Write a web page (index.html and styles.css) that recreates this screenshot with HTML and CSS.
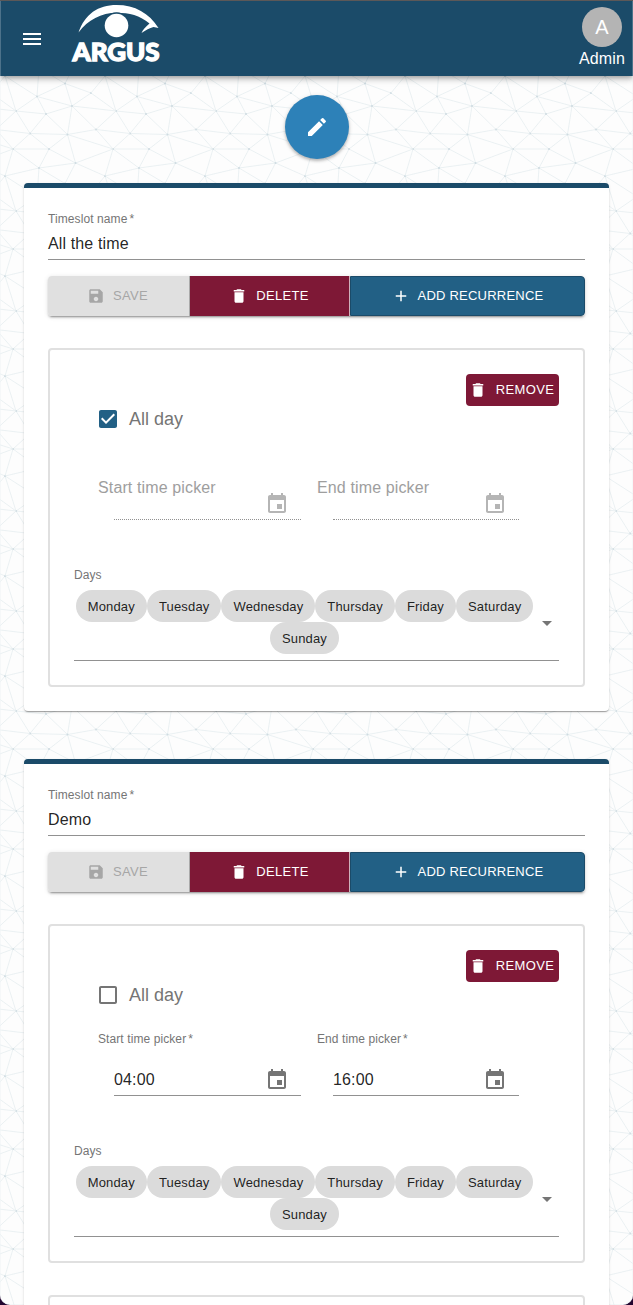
FILE: index.html
```html
<!DOCTYPE html>
<html lang="en">
<head>
<meta charset="utf-8">
<title>Argus - Timeslots</title>
<link rel="stylesheet" href="styles.css">
</head>
<body>
<svg class="defs" width="0" height="0">
  <symbol id="i-save" viewBox="0 0 24 24"><path d="M17 3H5c-1.11 0-2 .9-2 2v14c0 1.1.89 2 2 2h14c1.1 0 2-.9 2-2V7l-4-4zm-5 16c-1.66 0-3-1.34-3-3s1.34-3 3-3 3 1.34 3 3-1.34 3-3 3zm3-10H5V5h10v4z"/></symbol>
  <symbol id="i-delete" viewBox="0 0 24 24"><path d="M6 19c0 1.1.9 2 2 2h8c1.1 0 2-.9 2-2V7H6v12zM19 4h-3.5l-1-1h-5l-1 1H5v2h14V4z"/></symbol>
  <symbol id="i-add" viewBox="0 0 24 24"><path d="M19 13h-6v6h-2v-6H5v-2h6V5h2v6h6v2z"/></symbol>
  <symbol id="i-edit" viewBox="0 0 24 24"><path d="M3 17.25V21h3.75L17.81 9.94l-3.75-3.75L3 17.25zM20.71 7.04c.39-.39.39-1.02 0-1.41l-2.34-2.34a.9959.9959 0 00-1.41 0l-1.83 1.83 3.75 3.75 1.83-1.83z"/></symbol>
  <symbol id="i-menu" viewBox="0 0 24 24"><path d="M3 18h18v-2H3v2zm0-5h18v-2H3v2zm0-7v2h18V6H3z"/></symbol>
  <symbol id="i-checked" viewBox="0 0 24 24"><path d="M19 3H5c-1.11 0-2 .9-2 2v14c0 1.1.89 2 2 2h14c1.11 0 2-.9 2-2V5c0-1.1-.89-2-2-2zm-9 14l-5-5 1.41-1.41L10 14.17l7.59-7.59L19 8l-9 9z"/></symbol>
  <symbol id="i-unchecked" viewBox="0 0 24 24"><path d="M19 5v14H5V5h14m0-2H5c-1.1 0-2 .9-2 2v14c0 1.1.9 2 2 2h14c1.1 0 2-.9 2-2V5c0-1.1-.9-2-2-2z"/></symbol>
  <symbol id="i-event" viewBox="0 0 24 24"><path d="M17 12h-5v5h5v-5zM16 1v2H8V1H6v2H5c-1.11 0-1.99.9-1.99 2L3 19c0 1.1.89 2 2 2h14c1.1 0 2-.9 2-2V5c0-1.1-.9-2-2-2h-1V1h-2zm3 18H5V8h14v11z"/></symbol>
  <symbol id="i-arrow" viewBox="0 0 24 24"><path d="M7 10l5 5 5-5z"/></symbol>
</svg>
<svg class="mesh">
  <defs>
    <g id="cell">
      <path d="M5 76L16 111M5 76L37 96.500M5 76L-9 93M5 76L-24.500 63M65 83.500L37 96.500M65 83.500L72 106M65 83.500L91 93M65 83.500L39 68M65 83.500L75.500 63M37 96.500L39 68M5 76L39 68M91 93L72 106M91 93L116 111M72 106L37 96.500M72 106L46 114M72 106L67.500 134.500M72 106L116 111M72 106L96 129.500M116 111L96 129.500M16 111L37 96.500M16 111L46 114M37 96.500L46 114M16 111L30 133.500M46 114L30 133.500M46 114L67.500 134.500M96 129.500L67.500 134.500M96 129.500L130 133.500M30 133.500L67.500 134.500M67.500 134.500L49 149M67.500 134.500L113 149M67.500 134.500L75.500 163M30 133.500L13 149M30 133.500L49 149M13 149L49 149M49 149L75.500 163M49 149L39 168M13 149L39 168M75.500 163L39 168M75.500 163L113 149M13 149L5 176M13 149L-4 129.500"/>
      <path class="dots" d="M5 76h0M65 83.500h0M91 93h0M37 96.500h0M72 106h0M16 111h0M46 114h0M96 129.500h0M30 133.500h0M67.500 134.500h0M13 149h0M49 149h0M75.500 163h0M39 168h0"/>
    </g>
    <pattern id="net" width="100" height="100" patternUnits="userSpaceOnUse">
      <use href="#cell"/><use href="#cell" x="-100"/><use href="#cell" x="100"/>
      <use href="#cell" y="-100"/><use href="#cell" x="-100" y="-100"/><use href="#cell" x="100" y="-100"/>
    </pattern>
  </defs>
  <rect width="100%" height="100%" fill="url(#net)"/>
</svg>

<header class="appbar">
  <svg class="icon menu"><use href="#i-menu"/></svg>
  <svg class="logo" viewBox="0 0 92 62">
    <path d="M8.500 32.500C15 14 28 5 46.500 5C65 5 79 13 88.500 28L83.500 27C79.500 28 76 30 71.500 33C73 29.500 75.500 27 79.500 23.500C70 15.500 59 12.800 47 12.800C31 12.800 18 20 8.500 32.500Z"/>
    <circle cx="46.500" cy="25.500" r="13.200" class="gap"/>
    <circle cx="46.500" cy="25.500" r="11.800"/>
    <text x="2.500" y="61" textLength="87" lengthAdjust="spacingAndGlyphs">ARGUS</text>
  </svg>
  <div class="user"><span class="avatar">A</span><span class="name">Admin</span></div>
</header>

<main class="page">
  <button class="fab"><svg class="icon"><use href="#i-edit"/></svg></button>

  <section class="card">
    <div class="field"><label>Timeslot name<i>*</i></label><div class="value">All the time</div></div>
    <div class="group">
      <button class="btn save"><svg class="icon"><use href="#i-save"/></svg>SAVE</button>
      <button class="btn delete"><svg class="icon"><use href="#i-delete"/></svg>DELETE</button>
      <button class="btn add"><svg class="icon"><use href="#i-add"/></svg>ADD RECURRENCE</button>
    </div>
    <div class="recurrence">
      <button class="btn remove"><svg class="icon"><use href="#i-delete"/></svg>REMOVE</button>
      <div class="allday on"><svg class="icon"><use href="#i-checked"/></svg>All day</div>
      <div class="times disabled">
        <div class="time"><label>Start time picker</label><div class="input"><span></span><svg class="icon"><use href="#i-event"/></svg></div></div>
        <div class="time"><label>End time picker</label><div class="input"><span></span><svg class="icon"><use href="#i-event"/></svg></div></div>
      </div>
      <label class="days-label">Days</label>
      <div class="days">
        <div class="chips"><span class="chip">Monday</span><span class="chip">Tuesday</span><span class="chip">Wednesday</span><span class="chip">Thursday</span><span class="chip">Friday</span><span class="chip">Saturday</span><span class="chip">Sunday</span></div>
        <svg class="icon"><use href="#i-arrow"/></svg>
      </div>
    </div>
  </section>

  <section class="card">
    <div class="field"><label>Timeslot name<i>*</i></label><div class="value">Demo</div></div>
    <div class="group">
      <button class="btn save"><svg class="icon"><use href="#i-save"/></svg>SAVE</button>
      <button class="btn delete"><svg class="icon"><use href="#i-delete"/></svg>DELETE</button>
      <button class="btn add"><svg class="icon"><use href="#i-add"/></svg>ADD RECURRENCE</button>
    </div>
    <div class="recurrence">
      <button class="btn remove"><svg class="icon"><use href="#i-delete"/></svg>REMOVE</button>
      <div class="allday"><svg class="icon"><use href="#i-unchecked"/></svg>All day</div>
      <div class="times">
        <div class="time"><label>Start time picker<i>*</i></label><div class="input"><span>04:00</span><svg class="icon"><use href="#i-event"/></svg></div></div>
        <div class="time"><label>End time picker<i>*</i></label><div class="input"><span>16:00</span><svg class="icon"><use href="#i-event"/></svg></div></div>
      </div>
      <label class="days-label">Days</label>
      <div class="days">
        <div class="chips"><span class="chip">Monday</span><span class="chip">Tuesday</span><span class="chip">Wednesday</span><span class="chip">Thursday</span><span class="chip">Friday</span><span class="chip">Saturday</span><span class="chip">Sunday</span></div>
        <svg class="icon"><use href="#i-arrow"/></svg>
      </div>
    </div>
    <div class="recurrence next"></div>
  </section>
</main>
<div class="window-frame"></div>
</body>
</html>
```
FILE: styles.css
```css
* { box-sizing: border-box; }
html { background: #22052f; overflow: hidden; }
body {
  margin: 0;
  height: 1305px;
  overflow: hidden;
  position: relative;
  background: #fdfdfd;
  border-radius: 0 0 10px 10px;
  font: 16px/19px "Liberation Sans", Helvetica, Arial, sans-serif;
  color: rgba(0, 0, 0, 0.87);
}
.defs { position: absolute; }
.mesh {
  position: absolute;
  inset: 0;
  width: 100%;
  height: 100%;
  stroke: #e6edf0;
  stroke-width: 0.8;
  fill: none;
}
.mesh .dots { stroke: #cfdbe1; stroke-width: 2; stroke-linecap: round; }
.icon { width: 24px; height: 24px; fill: currentColor; flex: none; display: block; }
button { font-family: inherit; border: 0; padding: 0; }
i { font-style: normal; margin-left: 2px; }

.appbar {
  position: relative;
  height: 76px;
  display: flex;
  align-items: center;
  background: #1b4b69;
  color: #fff;
  padding: 0 8px 0 20px;
  box-shadow: 0 2px 4px -1px rgba(0,0,0,.2), 0 4px 5px rgba(0,0,0,.14), 0 1px 10px rgba(0,0,0,.12);
}
.menu { margin-top: 2px; }
.logo { width: 92px; height: 62px; margin: 0 auto 14px 26px; fill: #fff; overflow: visible; }
.logo .gap { fill: #1b4b69; }
.logo text { font: 900 24.5px Lato, sans-serif; stroke: #fff; stroke-width: 1.3; }
.user { display: flex; flex-direction: column; align-items: center; gap: 2px; margin-bottom: 1px; }
.name { letter-spacing: .15px; }
.avatar {
  width: 40px;
  height: 40px;
  border-radius: 50%;
  background: #b4b4b4;
  font-size: 20px;
  line-height: 40px;
  text-align: center;
}

.page {
  position: relative;
  display: flex;
  flex-direction: column;
  align-items: center;
  padding: 19px 24px 0;
}
.fab {
  width: 64px;
  height: 64px;
  border-radius: 50%;
  background: #2d81b8;
  color: #fff;
  display: grid;
  place-items: center;
  margin-bottom: 24px;
  box-shadow: 0 2px 3px rgba(0,0,0,.22), 0 1px 5px rgba(0,0,0,.12);
}
.card {
  width: 100%;
  background: #fff;
  border-top: 5px solid #1b4b69;
  border-radius: 4px;
  padding: 24px;
  margin-bottom: 48px;
  box-shadow: 0 2px 1px -1px rgba(0,0,0,.2), 0 1px 1px rgba(0,0,0,.14), 0 1px 3px rgba(0,0,0,.12);
}
label { display: block; font-size: 12px; line-height: 14px; letter-spacing: .09px; color: #757575; }
.field { height: 48px; border-bottom: 1px solid #919191; }
.value { padding-top: 8px; letter-spacing: .13px; }

.group {
  display: flex;
  height: 40px;
  margin: 16px 0 32px;
  border-radius: 4px;
  box-shadow: 0 3px 1px -2px rgba(0,0,0,.2), 0 2px 2px rgba(0,0,0,.14), 0 1px 5px rgba(0,0,0,.12);
}
.btn {
  display: flex;
  align-items: center;
  justify-content: center;
  gap: 8px;
  color: #fff;
  font-size: 13px;
  line-height: 16px;
  letter-spacing: .35px;
}
.btn .icon { width: 18px; height: 18px; }
.save { width: 142px; background: #e0e0e0; color: #a6a6a6; border-right: 1px solid #aaa; border-radius: 4px 0 0 4px; padding-right: 2px; }
.delete { width: 160px; background: #7e1836; border-right: 1px solid #d0b1bb; }
.add { flex: 1; background: #226085; border: 1px solid #1b4b69; border-radius: 0 4px 4px 0; letter-spacing: .22px; }

.recurrence { border: 2px solid #e0e0e0; border-radius: 4px; height: 339px; padding: 24px; }
.next { margin-top: 32px; }
.remove { width: 93px; height: 32px; border-radius: 4px; background: #7e1836; margin-left: auto; gap: 9px; padding-right: 2px; }
.allday {
  display: flex;
  align-items: center;
  gap: 9px;
  height: 26px;
  padding-left: 22px;
  font-size: 18px;
  color: #757575;
}
.on .icon { color: #226085; }
.times { display: grid; grid-template-columns: 187px 186px; column-gap: 32px; padding: 24px 0 0 24px; }
.time { height: 88px; }
.times label { height: 14px; white-space: nowrap; }
.input {
  display: flex;
  justify-content: space-between;
  height: 33px;
  margin: 17px 0 0 16px;
  width: 187px;
  border-bottom: 1px solid #919191;
}
.time + .time .input { width: 186px; }
.input span { padding-top: 7px; letter-spacing: .15px; }
.input .icon { color: #757575; margin: 5px 12px 0 0; }
.disabled label { font-size: 16px; line-height: 22px; margin-top: 21px; letter-spacing: .13px; color: #9e9e9e; }
.disabled .input { border-bottom: 1px dotted #919191; margin-top: -4px; }
.disabled .input .icon { color: #b5b5b5; }
.days-label { margin-top: 24px; }
.days { display: flex; align-items: center; height: 79px; border-bottom: 1px solid #919191; }
.days .icon { color: #757575; margin-top: 3px; }
.chips { width: 461px; display: flex; flex-wrap: wrap; justify-content: center; align-content: flex-start; margin-top: 2px; }
.chip {
  height: 32px;
  border-radius: 16px;
  background: #dbdbdb;
  padding: 0 12px;
  font-size: 13px;
  line-height: 33px;
  letter-spacing: .165px;
}
.window-frame {
  position: absolute;
  inset: 0;
  border-top: 1px solid #5c5858;
  box-shadow: inset 1px 0 rgba(255,255,255,.22), inset -1px 0 rgba(255,255,255,.22);
}
```
